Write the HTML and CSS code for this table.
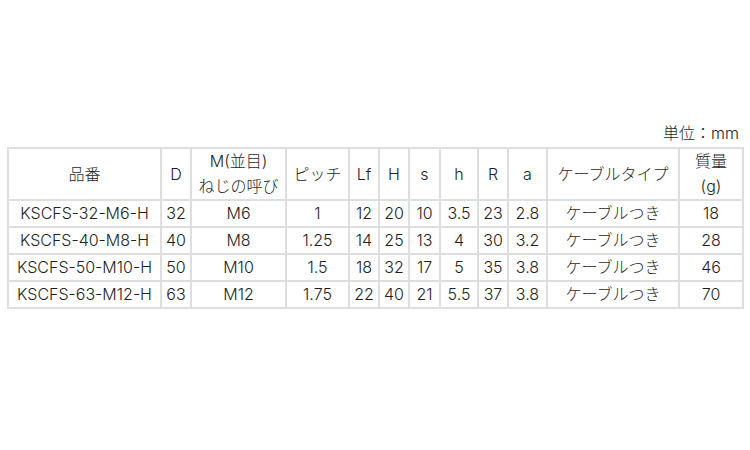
FILE: index.html
```html
<!DOCTYPE html>
<html lang="ja">
<head>
<meta charset="utf-8">
<link rel="stylesheet" href="styles.css">
</head>
<body>
<div class="wrap">
  <div class="unit">単位：mm</div>
  <table class="spec">
    <thead>
      <tr>
        <th class="c1">品番</th>
        <th class="c2">D</th>
        <th class="c3">M(並目)<br>ねじの呼び</th>
        <th class="c4">ピッチ</th>
        <th class="c5">Lf</th>
        <th class="c6">H</th>
        <th class="c7">s</th>
        <th class="c8">h</th>
        <th class="c9">R</th>
        <th class="c10">a</th>
        <th class="c11">ケーブルタイプ</th>
        <th class="c12">質量<br>(g)</th>
      </tr>
    </thead>
    <tbody>
      <tr><td>KSCFS-32-M6-H</td><td>32</td><td>M6</td><td>1</td><td>12</td><td>20</td><td>10</td><td>3.5</td><td>23</td><td>2.8</td><td>ケーブルつき</td><td>18</td></tr>
      <tr><td>KSCFS-40-M8-H</td><td>40</td><td>M8</td><td>1.25</td><td>14</td><td>25</td><td>13</td><td>4</td><td>30</td><td>3.2</td><td>ケーブルつき</td><td>28</td></tr>
      <tr><td>KSCFS-50-M10-H</td><td>50</td><td>M10</td><td>1.5</td><td>18</td><td>32</td><td>17</td><td>5</td><td>35</td><td>3.8</td><td>ケーブルつき</td><td>46</td></tr>
      <tr><td>KSCFS-63-M12-H</td><td>63</td><td>M12</td><td>1.75</td><td>22</td><td>40</td><td>21</td><td>5.5</td><td>37</td><td>3.8</td><td>ケーブルつき</td><td>70</td></tr>
    </tbody>
  </table>
</div>
</body>
</html>
```

FILE: styles.css
```css
html, body {
  margin: 0;
  padding: 0;
  background: #fff;
}
body {
  font-family: "Inter", "Noto Sans CJK JP", sans-serif;
  font-weight: 300;
  font-size: 16px;
  color: #1e1e1e;
}
.wrap {
  padding: 121px 0 0 7px;
  width: 737px;
}
.unit {
  text-align: right;
  line-height: 25px;
  padding-right: 5px;
  margin-bottom: 1px;
}
.spec {
  table-layout: fixed;
  width: 737px;
  border-collapse: separate;
  border-spacing: 0;
  border: 1px solid #dedede;
}
.spec th, .spec td {
  box-sizing: border-box;
  border: 1px solid #dedede;
  padding: 0;
  text-align: center;
  vertical-align: middle;
  font-weight: 300;
  line-height: 25px;
  white-space: nowrap;
}
.c1 { width: 153px; }
.c2 { width: 30px; }
.c3 { width: 95px; }
.c4 { width: 63px; }
.c5 { width: 30px; }
.c6 { width: 30px; }
.c7 { width: 31px; }
.c8 { width: 38px; }
.c9 { width: 30px; }
.c10 { width: 39px; }
.c11 { width: 132px; }
.c12 { width: 64px; }
```
